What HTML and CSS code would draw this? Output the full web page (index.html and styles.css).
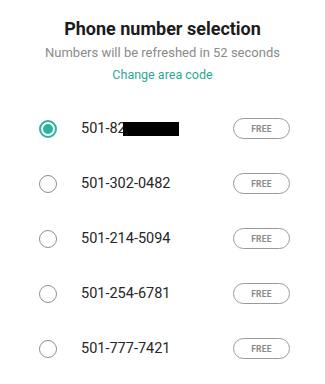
FILE: index.html
```html
<!DOCTYPE html>
<html>
<head>
<meta charset="utf-8">
<link rel="stylesheet" href="styles.css">
</head>
<body>
<div class="page">
  <header class="head">
    <h1 class="title">Phone number selection</h1>
    <p class="sub">Numbers will be refreshed in 52 seconds</p>
    <a class="link">Change area code</a>
  </header>
  <ul class="list">
    <li class="row">
      <span class="radio checked"></span>
      <span class="num">501-82<span class="redact"></span></span>
      <span class="pill">FREE</span>
    </li>
    <li class="row">
      <span class="radio"></span>
      <span class="num">501-302-0482</span>
      <span class="pill">FREE</span>
    </li>
    <li class="row">
      <span class="radio"></span>
      <span class="num">501-214-5094</span>
      <span class="pill">FREE</span>
    </li>
    <li class="row">
      <span class="radio"></span>
      <span class="num">501-254-6781</span>
      <span class="pill">FREE</span>
    </li>
    <li class="row">
      <span class="radio"></span>
      <span class="num">501-777-7421</span>
      <span class="pill">FREE</span>
    </li>
  </ul>
</div>
</body>
</html>
```
FILE: styles.css
```css
html, body {
  margin: 0;
  padding: 0;
  background: #ffffff;
}
body {
  font-family: Roboto, "Noto Sans", sans-serif;
  width: 325px;
  height: 384px;
  overflow: hidden;
}
.page {
  display: flex;
  flex-direction: column;
}
.head {
  display: flex;
  flex-direction: column;
  align-items: center;
  padding-top: 17px;
}
.title {
  margin: 0;
  font-size: 18px;
  font-weight: 700;
  color: #1c1c1c;
  line-height: 24px;
}
.sub {
  margin: 0;
  margin-top: 3px;
  font-size: 13px;
  color: #8a8a8a;
  line-height: 18px;
}
.link {
  margin-top: 4px;
  font-size: 12.5px;
  color: #2aa897;
  line-height: 18px;
}
.list {
  list-style: none;
  margin: 0;
  padding: 0;
  margin-top: 17px;
}
.row {
  height: 55px;
  display: flex;
  align-items: center;
  padding-left: 39px;
}
.radio {
  box-sizing: border-box;
  width: 18px;
  height: 18px;
  border-radius: 50%;
  border: 1.5px solid #8f8f8f;
  flex: none;
  display: flex;
  align-items: center;
  justify-content: center;
}
.radio.checked {
  border: 2px solid #2ab3a0;
}
.radio.checked::after {
  content: "";
  width: 10px;
  height: 10px;
  border-radius: 50%;
  background: #2ab3a0;
}
.num {
  margin-left: 24px;
  font-size: 14.5px;
  color: #262626;
  width: 152px;
  display: flex;
  align-items: center;
}
.redact {
  display: inline-block;
  width: 56px;
  height: 14px;
  background: #000;
  margin-left: -3px;
}
.pill {
  box-sizing: border-box;
  width: 57px;
  height: 21px;
  border: 1.2px solid #9a9a9a;
  border-radius: 11px;
  font-size: 8.5px;
  font-weight: 700;
  color: #8a8a8a;
  display: flex;
  align-items: center;
  justify-content: center;
  letter-spacing: 0.2px;
}
```
